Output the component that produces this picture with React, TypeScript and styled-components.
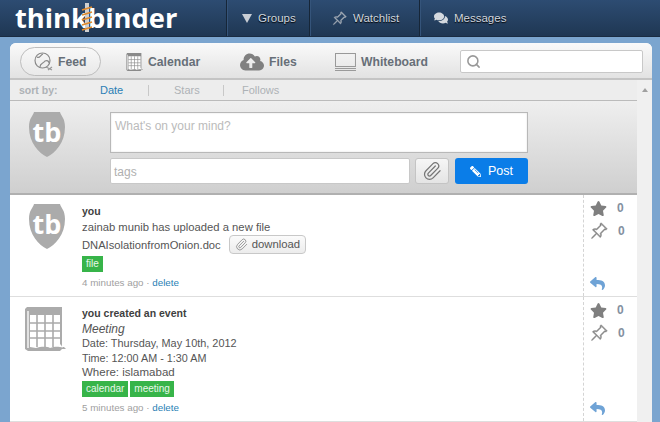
import React from 'react';
import styled, { createGlobalStyle } from 'styled-components';
import { Paperclip, Search } from 'lucide-react';
import { BsPinAngle } from 'react-icons/bs';
import { FaCloudUploadAlt, FaComments, FaPencilAlt, FaReply, FaStar } from 'react-icons/fa';

const GlobalStyle = createGlobalStyle`
  html, body {
    margin: 0;
    padding: 0;
    background: #7ba5cf;
    font-family: "Liberation Sans", Arial, sans-serif;
  }
`;

const Page = styled.div`
  width: 660px;
  height: 422px;
  overflow: hidden;
`;

const Header = styled.header`
  display: flex;
  height: 36px;
  background: linear-gradient(#2d4c72, #1f3753);
  border-bottom: 1px solid #1a2c42;
`;

const LogoBox = styled.div`
  width: 226px;
  padding-left: 15px;
  box-sizing: border-box;
  flex-shrink: 0;
`;

const Logo = styled.div`
  position: relative;
  width: 170px;
  color: #fff;
  font-family: "Open Sans", sans-serif;
  font-weight: 700;
  font-size: 27.3px;
  line-height: 36px;
`;

const Spring = styled.svg`
  position: absolute;
  left: 66px;
  top: 3px;
  width: 12px;
  height: 29px;
`;

const NavItem = styled.div<{ $width: number; $pad: number; $last?: boolean }>`
  width: ${({ $width }) => $width}px;
  box-sizing: border-box;
  display: flex;
  align-items: center;
  gap: 6px;
  padding-left: ${({ $pad }) => $pad}px;
  border-left: 1px solid #162638;
  box-shadow: inset 1px 0 0 #35547a;
  border-right: ${({ $last }) => ($last ? '1px solid #162638' : 'none')};
  color: #cfd6de;
  font-size: 11.5px;
  text-shadow: 0 1px 1px #000;
`;

const NavTriangle = styled.span`
  width: 0;
  height: 0;
  border-left: 5px solid transparent;
  border-right: 5px solid transparent;
  border-top: 9px solid #c9ced5;
`;

const Panel = styled.main`
  margin: 6px 8px 0 10px;
  height: 380px;
  background: #fff;
  border-radius: 6px 6px 0 0;
  overflow: hidden;
`;

const TabBar = styled.nav`
  height: 37px;
  box-sizing: border-box;
  display: flex;
  align-items: center;
  padding: 2px 9px 0 10px;
  background: linear-gradient(#fafafa, #e2e2e2);
  border-bottom: 2px solid #c4c4c4;
`;

const Tab = styled.div<{ $active?: boolean; $width: number; $pad: number }>`
  width: ${({ $width }) => $width}px;
  height: 29px;
  box-sizing: border-box;
  display: flex;
  align-items: center;
  gap: 5px;
  padding-left: ${({ $pad }) => $pad}px;
  border-radius: 15px;
  border: ${({ $active }) => ($active ? '1px solid #bdbdbd' : 'none')};
  background: ${({ $active }) => ($active ? 'linear-gradient(#f8f8f8, #e9e9e9)' : 'none')};
  color: #676f78;
  font-size: 12.2px;
  font-weight: 700;
`;

const SearchBox = styled.div`
  width: 183px;
  height: 23px;
  margin-left: auto;
  box-sizing: border-box;
  display: flex;
  align-items: center;
  padding-left: 5px;
  background: #fff;
  border: 1px solid #c8c8c8;
  border-radius: 2px;
  color: #999;
`;

const Body = styled.div`
  display: flex;
`;

const Feed = styled.div`
  width: 627px;
`;

const Scrollbar = styled.div`
  width: 15px;
  height: 343px;
  display: flex;
  justify-content: center;
  padding-top: 8px;
  box-sizing: border-box;
  background: #f0f0f0;
`;

const ScrollArrow = styled.span`
  width: 0;
  height: 0;
  border-left: 3px solid transparent;
  border-right: 3px solid transparent;
  border-bottom: 4px solid #a0a0a0;
`;

const SortBar = styled.div`
  height: 20px;
  box-sizing: border-box;
  display: flex;
  align-items: center;
  padding-left: 9px;
  background: #ededed;
  color: #adb2b6;
  font-size: 11px;
`;

const SortLabel = styled.span`
  width: 81px;
  font-size: 10.5px;
  font-weight: 700;
`;

const SortLink = styled.span<{ $active?: boolean; $width: number }>`
  width: ${({ $width }) => $width}px;
  color: ${({ $active }) => ($active ? '#2a7fb5' : '#adb2b6')};
`;

const SortDivider = styled.span<{ $gap: number }>`
  width: 1px;
  height: 11px;
  margin-right: ${({ $gap }) => $gap}px;
  background: #c8c8c8;
`;

const Composer = styled.section`
  height: 95px;
  box-sizing: border-box;
  display: flex;
  padding: 11px 0 0 19px;
  background: linear-gradient(#efefef, #cfcfcf);
  border-top: 1px solid #bbb;
  border-bottom: 2px solid #b0b0b0;
`;

const ComposerForm = styled.div`
  width: 418px;
  margin-left: 45px;
  display: flex;
  flex-direction: column;
  gap: 5px;
`;

const MindInput = styled.div`
  height: 41px;
  box-sizing: border-box;
  padding: 6px 4px;
  background: #fff;
  border: 1px solid #b8b8b8;
  box-shadow: inset 0 0 2px #ddd;
  color: #bbb;
  font-size: 12px;
`;

const ComposerRow = styled.div`
  display: flex;
  gap: 5px;
`;

const TagsInput = styled.div`
  width: 300px;
  height: 26px;
  box-sizing: border-box;
  padding: 6px 3px;
  background: #fff;
  border: 1px solid #c8c8c8;
  border-radius: 2px;
  color: #b0b0b0;
  font-size: 12px;
`;

const AttachButton = styled.div`
  width: 34px;
  height: 26px;
  box-sizing: border-box;
  display: flex;
  align-items: center;
  justify-content: center;
  background: linear-gradient(#f6f6f6, #e4e4e4);
  border: 1px solid #c4c4c4;
  border-radius: 3px;
  color: #777;
`;

const PostButton = styled.div`
  width: 73px;
  height: 26px;
  margin-left: 1px;
  display: flex;
  align-items: center;
  justify-content: center;
  gap: 7px;
  background: #0a7de8;
  border-radius: 3px;
  color: #fff;
  font-size: 12.5px;
`;

const Item = styled.article<{ $height: number }>`
  height: ${({ $height }) => $height}px;
  display: flex;
  border-bottom: 1px solid #dedede;
`;

const ItemIcon = styled.div<{ $pad: number }>`
  width: 72px;
  padding: 9px 0 0 ${({ $pad }) => $pad}px;
  box-sizing: border-box;
`;

const ItemMain = styled.div`
  width: 501px;
  padding-top: 8px;
  color: #555;
`;

const ItemTitle = styled.div`
  margin-bottom: 1px;
  font-size: 10.5px;
  font-weight: 700;
  line-height: 16px;
  color: #3f3f3f;
`;

const ItemLine = styled.div<{ $size?: number }>`
  font-size: ${({ $size }) => $size ?? 11.25}px;
  line-height: 14.5px;
`;

const EventName = styled.div`
  font-size: 12px;
  font-style: italic;
  line-height: 14px;
`;

const FileRow = styled.div`
  display: flex;
  align-items: center;
  gap: 8px;
  margin-top: 1px;
  height: 19px;
  font-size: 11.2px;
`;

const DownloadButton = styled.div`
  height: 19px;
  margin-bottom: 2px;
  box-sizing: border-box;
  display: flex;
  align-items: center;
  gap: 4px;
  padding: 0 5px;
  background: linear-gradient(#fbfbfb, #ececec);
  border: 1px solid #c8c8c8;
  border-radius: 4px;
  color: #555;
  font-size: 11.3px;
`;

const Tags = styled.div`
  display: flex;
  gap: 2px;
  margin-top: 1px;
`;

const Tag = styled.span`
  height: 16px;
  padding: 0 4px;
  background: #37b449;
  color: #e8f7ea;
  font-size: 10px;
  line-height: 16px;
`;

const Meta = styled.div`
  margin-top: 4px;
  color: #a0a0a0;
  font-size: 9.8px;
  line-height: 14px;
`;

const MetaLink = styled.span`
  color: #2a7fb5;
`;

const Stats = styled.aside`
  width: 54px;
  box-sizing: border-box;
  display: flex;
  flex-direction: column;
  padding: 2px 0 5px 6px;
  border-left: 1px dashed #d4d4d4;
`;

const StatRow = styled.div`
  height: 22.5px;
  display: flex;
  align-items: center;
  gap: 10px;
  color: #8490a0;
  font-size: 12px;
  font-weight: 700;
`;

const ReplyIcon = styled.div`
  margin-top: auto;
  color: #6fa3d6;
  line-height: 0;
`;

const Shield = () => (
  <svg width={36} height={45} viewBox="0 0 36 45">
    <path d="M5 0 H31 C32 4 36 6 36 15 C36 31 26 41 18 45 C10 41 0 31 0 15 C0 6 4 4 5 0 Z" fill="#ababab" />
    <text x="18" y="30" textAnchor="middle" fill="#fff" fontFamily="Open Sans, sans-serif" fontWeight="700" fontSize="27">tb</text>
  </svg>
);

const CalendarGrid = ({ width, height, tone }: { width: number; height: number; tone: string }) => (
  <svg width={width} height={height} viewBox="0 0 42 46">
    <path d="M1 3 L3 1 H38 V41 H40 L42 43 H38 L36 45 H4 L1 43 Z" fill={tone} />
    <path d="M3 5 V42 H5 V5 Z" fill="#e2e2e2" />
    <path d="M6 9 H36 V38 C38 40 38 41 39 42 C34 40 30 41 26 42 C22 40 16 41 12 42 L6 41 Z" fill="#fff" />
    <path d="M13 9 V41 M21 9 V41 M29 9 V41 M6 17 H36 M6 25 H36 M6 32 H36" stroke={tone} strokeWidth="1.6" fill="none" />
  </svg>
);

const FeedIcon = () => (
  <svg width="19" height="20" viewBox="0 0 19 20" fill="none" stroke="#8a8a8a" strokeWidth="1.2">
    <circle cx="8.5" cy="8.5" r="7.5" />
    <path d="M3 5 C6 7 6 3 9 2 M6 15 C6 11 9 12 11 9 C13 8 15 9 15 11" />
    <path d="M12 15 L18 18 M14 18 L18 15" stroke="#999" />
  </svg>
);

const WhiteboardIcon = () => (
  <svg width="21" height="18" viewBox="0 0 21 18" fill="none" stroke="#999" strokeWidth="1">
    <rect x="0.5" y="0.5" width="20" height="13" />
    <path d="M0 15.5 H21 M0 17.5 H21" />
  </svg>
);

const StatPin = () => <BsPinAngle size={18} color="#8a8a8a" strokeWidth={0.4} />;

const App: React.FC = () => (
  <Page>
    <GlobalStyle />
    <Header>
      <LogoBox>
        <Logo>
          thinkbinder
          <Spring viewBox="0 0 12 29">
            <path d="M6 0 V29" stroke="#cfcfcf" strokeWidth="4" />
            <path d="M1 7 L11 4 M1 12 L11 9 M1 17 L11 14 M1 22 L11 19 M1 27 L11 24" stroke="#e08a2c" strokeWidth="1.8" />
          </Spring>
        </Logo>
      </LogoBox>
      <NavItem $width={83} $pad={15}>
        <NavTriangle />
        Groups
      </NavItem>
      <NavItem $width={110} $pad={22}>
        <BsPinAngle size={15} color="#a4acb6" strokeWidth={0.4} />
        Watchlist
      </NavItem>
      <NavItem $width={102} $pad={14}>
        <FaComments size={14} color="#d4d9df" />
        Messages
      </NavItem>
    </Header>
    <Panel>
      <TabBar>
        <Tab $active $width={81} $pad={13}>
          <FeedIcon />
          Feed
        </Tab>
        <Tab $width={112} $pad={25}>
          <CalendarGrid width={17} height={20} tone="#8a8a8a" />
          Calendar
        </Tab>
        <Tab $width={95} $pad={27}>
          <FaCloudUploadAlt size={24} color="#808080" />
          Files
        </Tab>
        <Tab $width={120} $pad={27}>
          <WhiteboardIcon />
          Whiteboard
        </Tab>
        <SearchBox>
          <Search size={15} strokeWidth={2.5} />
        </SearchBox>
      </TabBar>
      <Body>
        <Feed>
          <SortBar>
            <SortLabel>sort by:</SortLabel>
            <SortLink $active $width={48}>Date</SortLink>
            <SortDivider $gap={25} />
            <SortLink $width={49}>Stars</SortLink>
            <SortDivider $gap={18} />
            <SortLink $width={60}>Follows</SortLink>
          </SortBar>
          <Composer>
            <Shield />
            <ComposerForm>
              <MindInput>What's on your mind?</MindInput>
              <ComposerRow>
                <TagsInput>tags</TagsInput>
                <AttachButton>
                  <Paperclip size={20} strokeWidth={1.5} />
                </AttachButton>
                <PostButton>
                  <FaPencilAlt size={11} style={{ transform: 'scaleX(-1)' }} />
                  Post
                </PostButton>
              </ComposerRow>
            </ComposerForm>
          </Composer>
          <Item $height={101}>
            <ItemIcon $pad={19}>
              <Shield />
            </ItemIcon>
            <ItemMain>
              <ItemTitle>you</ItemTitle>
              <ItemLine>zainab munib has uploaded a new file</ItemLine>
              <FileRow>
                DNAIsolationfromOnion.doc
                <DownloadButton>
                  <Paperclip size={13} strokeWidth={1.5} color="#888" />
                  download
                </DownloadButton>
              </FileRow>
              <Tags>
                <Tag>file</Tag>
              </Tags>
              <Meta>
                4 minutes ago · <MetaLink>delete</MetaLink>
              </Meta>
            </ItemMain>
            <Stats>
              <StatRow>
                <FaStar size={17} color="#7f7f7f" />0
              </StatRow>
              <StatRow>
                <StatPin />0
              </StatRow>
              <ReplyIcon>
                <FaReply size={15} />
              </ReplyIcon>
            </Stats>
          </Item>
          <Item $height={124}>
            <ItemIcon $pad={14}>
              <CalendarGrid width={42} height={46} tone="#ababab" />
            </ItemIcon>
            <ItemMain>
              <ItemTitle>you created an event</ItemTitle>
              <EventName>Meeting</EventName>
              <ItemLine $size={10.9}>Date: Thursday, May 10th, 2012</ItemLine>
              <ItemLine $size={10.8}>Time: 12:00 AM - 1:30 AM</ItemLine>
              <ItemLine $size={11.5}>Where: islamabad</ItemLine>
              <Tags>
                <Tag>calendar</Tag>
                <Tag>meeting</Tag>
              </Tags>
              <Meta>
                5 minutes ago · <MetaLink>delete</MetaLink>
              </Meta>
            </ItemMain>
            <Stats>
              <StatRow>
                <FaStar size={17} color="#7f7f7f" />0
              </StatRow>
              <StatRow>
                <StatPin />0
              </StatRow>
              <ReplyIcon>
                <FaReply size={15} />
              </ReplyIcon>
            </Stats>
          </Item>
        </Feed>
        <Scrollbar>
          <ScrollArrow />
        </Scrollbar>
      </Body>
    </Panel>
  </Page>
);

export default App;
